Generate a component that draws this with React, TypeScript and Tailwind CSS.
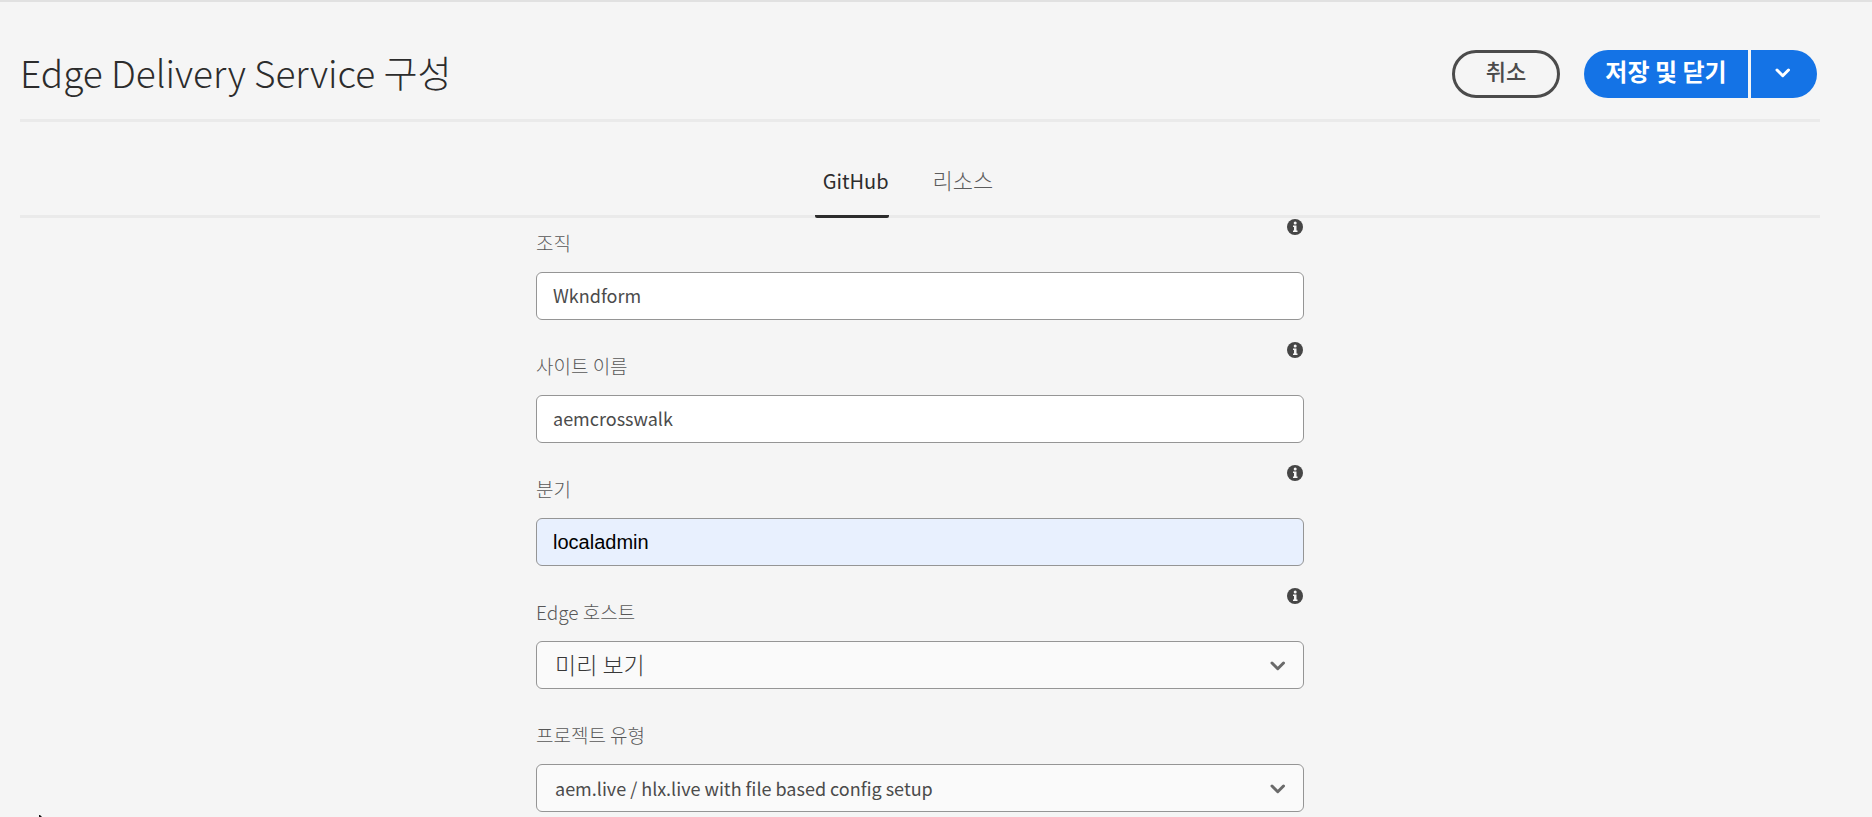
import { useId, useState } from "react";

function InfoIcon() {
  return (
    <svg viewBox="0 0 16 16" className="size-4" aria-hidden="true">
      <circle cx="8" cy="8" r="8" fill="#464646" />
      <circle cx="8.2" cy="4" r="1.5" fill="#f5f5f5" />
      <path d="M6 6.6h3.5v4.9h1V13H6v-1.5h1V8.1H6z" fill="#f5f5f5" />
    </svg>
  );
}

function Chevron({ className }: { className: string }) {
  return (
    <svg viewBox="0 0 16 10" className={className} fill="none" aria-hidden="true">
      <path d="M2 2l5.75 5.75L13.5 2" stroke="currentColor" strokeWidth="3" strokeLinecap="round" strokeLinejoin="round" />
    </svg>
  );
}

function FieldHead({ id, label, info = true }: { id: string; label: string; info?: boolean }) {
  return (
    <div className="flex h-[54px] items-start justify-between">
      <label htmlFor={id} className="pt-[13px] text-[19px] leading-6 font-light text-[#585858]">
        {label}
      </label>
      {info && (
        <button type="button" aria-label="Info" className="pt-px pr-px">
          <InfoIcon />
        </button>
      )}
    </div>
  );
}

function TextField({ label, value, autofilled = false }: { label: string; value: string; autofilled?: boolean }) {
  const id = useId();
  const look = autofilled
    ? "bg-[#e8f0fe] text-[20px] text-black font-['Liberation_Sans',sans-serif]"
    : "bg-white pb-0.5 text-[18px] text-[#4b4b4b]";
  return (
    <div>
      <FieldHead id={id} label={label} />
      <input
        id={id}
        defaultValue={value}
        className={`block h-12 w-full rounded-md border border-[#959595] px-4 ${look}`}
      />
    </div>
  );
}

function SelectField({ label, value, info, light = false }: { label: string; value: string; info?: boolean; light?: boolean }) {
  const id = useId();
  return (
    <div>
      <FieldHead id={id} label={label} info={info} />
      <div className="relative">
        <select
          id={id}
          className={`block h-12 w-full appearance-none rounded-md border border-[#959595] bg-[#fafafa] px-[18px] ${light ? "pb-0.5 text-[23px] font-light text-[#383838]" : "text-[18px] text-[#4b4b4b]"}`}
        >
          <option>{value}</option>
        </select>
        <Chevron className="pointer-events-none absolute top-5 right-[18px] h-[10px] w-4 text-[#6a6a6a]" />
      </div>
    </div>
  );
}

export default function App() {
  const [tab, setTab] = useState("GitHub");
  return (
    <div className="relative min-h-screen overflow-hidden border-t-2 border-[#e1e1e1] bg-[#f5f5f5] font-['Noto_Sans_CJK_KR',sans-serif]">
      <div className="mr-[52px] ml-5">
        <header className="flex h-[120px] items-center justify-between border-b-[3px] border-[#eaeaea] pr-[3px]">
          <h1 className="pt-6 text-[37px] leading-none font-light text-[#2c2c2c]">Edge Delivery Service 구성</h1>
          <div className="flex items-center gap-6 pt-[26px]">
            <button type="button" className="h-12 w-[108px] rounded-full border-[3px] border-[#4b4b4b] pb-2 text-[22px] leading-none font-medium text-[#4b4b4b]">
              취소
            </button>
            <div className="flex gap-[3px] text-white">
              <button type="button" className="h-12 w-[164px] rounded-l-full bg-[#1473e6] pb-1.5 text-[24px] leading-none font-bold">
                저장 및 닫기
              </button>
              <button type="button" aria-label="More" className="flex h-12 w-[66px] items-center justify-center rounded-r-full bg-[#1473e6] pr-0.5 pb-0.5">
                <Chevron className="h-[10px] w-4" />
              </button>
            </div>
          </div>
        </header>

        <nav role="tablist" className="flex h-24 justify-center gap-[36px] border-b-[3px] border-[#eaeaea] pr-8">
          {["GitHub", "리소스"].map((name) => (
            <button
              key={name}
              type="button"
              role="tab"
              aria-selected={tab === name}
              onClick={() => setTab(name)}
              className={
                tab === name
                  ? "-mb-[3px] rounded-b-xs border-b-[3px] border-[#2c2c2c] pt-6 pl-2 text-[20px] text-[#2c2c2c]"
                  : "-mb-[3px] border-b-[3px] border-transparent pt-[22px] pl-2 text-[22px] font-light text-[#5c5c5c]"
              }
            >
              {name}
            </button>
          ))}
        </nav>

        <form className="mx-auto flex w-full max-w-[768px] flex-col gap-[21px]">
          <TextField label="조직" value="Wkndform" />
          <TextField label="사이트 이름" value="aemcrosswalk" />
          <TextField label="분기" value="localadmin" autofilled />
          <SelectField label="Edge 호스트" value="미리 보기" light />
          <SelectField label="프로젝트 유형" value="aem.live / hlx.live with file based config setup" info={false} />
        </form>
      </div>
      <svg viewBox="0 0 3 2" className="absolute bottom-0 left-[39px] h-[2px] w-[3px]" aria-hidden="true">
        <path d="M0 0h1l2 2H0z" fill="#111" />
      </svg>
    </div>
  );
}
